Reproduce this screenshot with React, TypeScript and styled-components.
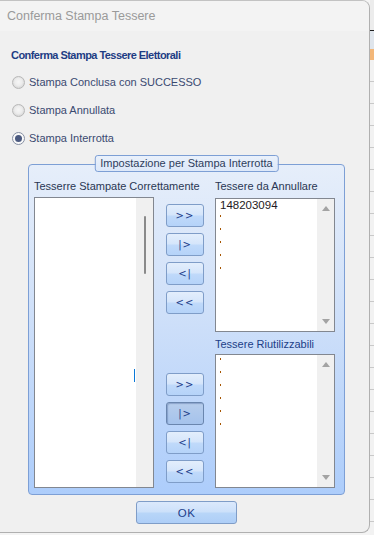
import React from "react";
import styled, { createGlobalStyle, css } from "styled-components";

const Global = createGlobalStyle`
  html, body { margin: 0; padding: 0; }
  body {
    width: 374px; height: 535px; overflow: hidden;
    background: #f4f4f4;
    font-family: "Liberation Sans", Arial, sans-serif;
  }
  * { box-sizing: border-box; }
`;

const Page = styled.div`
  display: flex;
  width: 374px;
  height: 535px;
`;

const Window = styled.div`
  width: 370px;
  height: 533px;
  flex: none;
  border-top: 1px solid #c2c2c2;
  border-right: 1px solid #b0b0b0;
  border-bottom: 1px solid #b0b0b0;
  border-radius: 0 8px 8px 0;
  background: #f0f0f0;
  display: flex;
  flex-direction: column;
  overflow: hidden;
`;

const Backdrop = styled.div`
  flex: 1;
  display: flex;
  flex-direction: column;
`;

const BackdropPart = styled.div<{ $h: number; $bg: string }>`
  height: ${(p) => p.$h}px;
  background: ${(p) => p.$bg};
  flex: none;
`;

const BackdropGrid = styled.div`
  flex: 1;
  background: repeating-linear-gradient(
    to bottom,
    #f2f2f2 0px,
    #f2f2f2 21px,
    #c9c9c9 21px,
    #c9c9c9 22px
  );
`;

const TitleBar = styled.div`
  height: 30px;
  flex: none;
  background: #f3f3f3;
  display: flex;
  align-items: center;
  padding-left: 7px;
  font-size: 12.5px;
  color: #9a9a9a;
`;

const Body = styled.div`
  flex: 1;
  display: flex;
  flex-direction: column;
  padding-top: 17px;
`;

const Heading = styled.div`
  margin-left: 11px;
  height: 14px;
  line-height: 14px;
  font-weight: bold;
  font-size: 11px;
  letter-spacing: -0.55px;
  color: #1e3d84;
`;

const RadioGroup = styled.div`
  display: flex;
  flex-direction: column;
  gap: 12px;
  margin-top: 12px;
  padding-left: 12px;
`;

const RadioRow = styled.div`
  height: 16px;
  display: flex;
  align-items: center;
  gap: 4px;
  font-size: 11px;
  color: #3a4a70;
`;

const RadioCircle = styled.span<{ $checked?: boolean }>`
  width: 13px;
  height: 13px;
  border-radius: 50%;
  border: 1px solid #b8b8b8;
  background: radial-gradient(circle at 50% 45%, #f6f6f6 0%, #ececec 45%, #d8d8d8 75%);
  display: flex;
  align-items: center;
  justify-content: center;
  flex: none;
  ${(p) =>
    p.$checked &&
    css`
      border-color: #8790a4;
      background: #fafafa;
      &::after {
        content: "";
        width: 7px;
        height: 7px;
        border-radius: 50%;
        background: #4b5a80;
      }
    `}
`;

const GroupFrame = styled.div`
  position: relative;
  margin-top: 18px;
  margin-left: 28px;
  width: 317px;
  height: 331px;
  border: 1px solid #7d9fd5;
  border-radius: 4px;
  background: linear-gradient(to bottom, #e6eefa 0%, #cfe0f9 45%, #adcdfb 100%);
  display: flex;
  padding: 14px 0 0 5px;
`;

const Legend = styled.div`
  position: absolute;
  top: -10px;
  left: 50%;
  transform: translateX(-50%);
  height: 17px;
  padding: 0 5px;
  border: 1px solid #7d9fd5;
  border-radius: 3px;
  background: linear-gradient(to bottom, #eaf1fb, #dde8f9);
  font-size: 11px;
  line-height: 15px;
  color: #2e3d5c;
  white-space: nowrap;
`;

const Column = styled.div<{ $ml?: number }>`
  display: flex;
  flex-direction: column;
  width: 120px;
  margin-left: ${(p) => p.$ml ?? 0}px;
`;

const ButtonColumn = styled.div`
  display: flex;
  flex-direction: column;
  width: 38px;
  margin-left: 12px;
`;

const ButtonStack = styled.div<{ $mt: number }>`
  display: flex;
  flex-direction: column;
  gap: 6px;
  margin-top: ${(p) => p.$mt}px;
`;

const Label = styled.div<{ $mt?: number; $blue?: boolean }>`
  height: 15px;
  line-height: 15px;
  margin-top: ${(p) => p.$mt ?? 0}px;
  font-size: 11px;
  color: #2a3753;
  white-space: nowrap;
  ${(p) =>
    p.$blue &&
    css`
      color: #213f88;
    `}
`;

const ListBox = styled.div<{ $h: number; $mt: number }>`
  height: ${(p) => p.$h}px;
  margin-top: ${(p) => p.$mt}px;
  border: 1px solid #828790;
  background: #fff;
  display: flex;
`;

const ListContent = styled.div`
  position: relative;
  flex: 1;
  display: flex;
  flex-direction: column;
  padding-left: 4px;
`;

const ListRow = styled.div`
  height: 13px;
  line-height: 13px;
  font-size: 11.5px;
  color: #1e1a22;
  display: flex;
  align-items: flex-start;
`;

const Dot = styled.span`
  width: 1px;
  height: 2px;
  margin-top: 3px;
  background: #a65400;
`;

const Caret = styled.span`
  position: absolute;
  left: 99px;
  top: 171px;
  width: 1px;
  height: 13px;
  background: #0a78d7;
`;

const ScrollBar = styled.div`
  width: 17px;
  flex: none;
  background: #f0f0f0;
  display: flex;
  flex-direction: column;
  align-items: center;
`;

const ArrowBar = styled(ScrollBar)`
  justify-content: space-between;
  padding: 7px 0 7px;
`;

const Thumb = styled.div`
  width: 2px;
  height: 58px;
  margin-top: 18px;
  margin-left: 1px;
  background: #8a8a8a;
  border-radius: 1px;
`;

const Tri = styled.span<{ $down?: boolean }>`
  width: 0;
  height: 0;
  border-left: 4.5px solid transparent;
  border-right: 4.5px solid transparent;
  ${(p) =>
    p.$down
      ? css`border-top: 5px solid #a3a3a3;`
      : css`border-bottom: 5px solid #a3a3a3;`}
`;

const MoveButton = styled.button<{ $pressed?: boolean }>`
  width: 38px;
  height: 23px;
  padding: 0;
  border: 1px solid #7f9dc8;
  border-radius: 3px;
  background: linear-gradient(to bottom, #e3eefc 0%, #d6e6fb 45%, #bfd9fa 55%, #b5d3f9 100%);
  color: #1c3d8a;
  font-family: "DejaVu Sans", sans-serif;
  font-size: 10px;
  letter-spacing: 1px;
  display: flex;
  align-items: center;
  justify-content: center;
  ${(p) =>
    p.$pressed &&
    css`
      border-color: #6a86ae;
      background: linear-gradient(to bottom, #b7cdec 0%, #aec8ec 50%, #a5c3ec 100%);
      box-shadow: inset 1px 1px 1px rgba(60, 90, 140, 0.35);
    `}
`;

const OkButton = styled.button`
  margin-top: 6px;
  margin-left: 136px;
  width: 101px;
  height: 23px;
  padding: 0;
  border: 1px solid #7f9dc8;
  border-radius: 3px;
  background: linear-gradient(to bottom, #dbe9fc 0%, #cde1fa 45%, #b7d5f8 55%, #aecef7 100%);
  color: #1c3d8a;
  font-family: "Liberation Sans", Arial, sans-serif;
  font-size: 11.5px;
  letter-spacing: 0.5px;
`;

const MoveButtons: React.FC<{ pressedIndex?: number; mt: number }> = ({ pressedIndex, mt }) => {
  const labels = [">>", "|>", "<|", "<<"];
  return (
    <ButtonStack $mt={mt}>
      {labels.map((l, i) => (
        <MoveButton key={l} $pressed={i === pressedIndex}>
          {l}
        </MoveButton>
      ))}
    </ButtonStack>
  );
};

const DotRows: React.FC<{ n: number }> = ({ n }) => (
  <>
    {Array.from({ length: n }).map((_, i) => (
      <ListRow key={i}>
        <Dot />
      </ListRow>
    ))}
  </>
);

export default function App() {
  return (
    <>
      <Global />
      <Page>
        <Window>
          <TitleBar>Conferma Stampa Tessere</TitleBar>
          <Body>
            <Heading>Conferma Stampa Tessere Elettorali</Heading>
            <RadioGroup>
              <RadioRow>
                <RadioCircle />
                Stampa Conclusa con SUCCESSO
              </RadioRow>
              <RadioRow>
                <RadioCircle />
                Stampa Annullata
              </RadioRow>
              <RadioRow>
                <RadioCircle $checked />
                Stampa Interrotta
              </RadioRow>
            </RadioGroup>
            <GroupFrame>
              <Legend>Impostazione per Stampa Interrotta</Legend>
              <Column>
                <Label>Tesserre Stampate Correttamente</Label>
                <ListBox $h={291} $mt={3}>
                  <ListContent>
                    <Caret />
                  </ListContent>
                  <ScrollBar>
                    <Thumb />
                  </ScrollBar>
                </ListBox>
              </Column>
              <ButtonColumn>
                <MoveButtons mt={25} />
                <MoveButtons mt={59} pressedIndex={1} />
              </ButtonColumn>
              <Column $ml={11}>
                <Label>Tessere da Annullare</Label>
                <ListBox $h={134} $mt={4}>
                  <ListContent>
                    <ListRow>148203094</ListRow>
                    <DotRows n={5} />
                  </ListContent>
                  <ArrowBar>
                    <Tri />
                    <Tri $down />
                  </ArrowBar>
                </ListBox>
                <Label $mt={5} $blue>
                  Tessere Riutilizzabili
                </Label>
                <ListBox $h={134} $mt={2}>
                  <ListContent>
                    <DotRows n={6} />
                  </ListContent>
                  <ArrowBar>
                    <Tri />
                    <Tri $down />
                  </ArrowBar>
                </ListBox>
              </Column>
            </GroupFrame>
            <OkButton>OK</OkButton>
          </Body>
        </Window>
        <Backdrop>
          <BackdropPart $h={30} $bg="#ececec" />
          <BackdropPart $h={1} $bg="#202020" />
          <BackdropPart $h={18} $bg="#dfe5ec" />
          <BackdropPart $h={11} $bg="#f3b779" />
          <BackdropGrid />
        </Backdrop>
      </Page>
    </>
  );
}
